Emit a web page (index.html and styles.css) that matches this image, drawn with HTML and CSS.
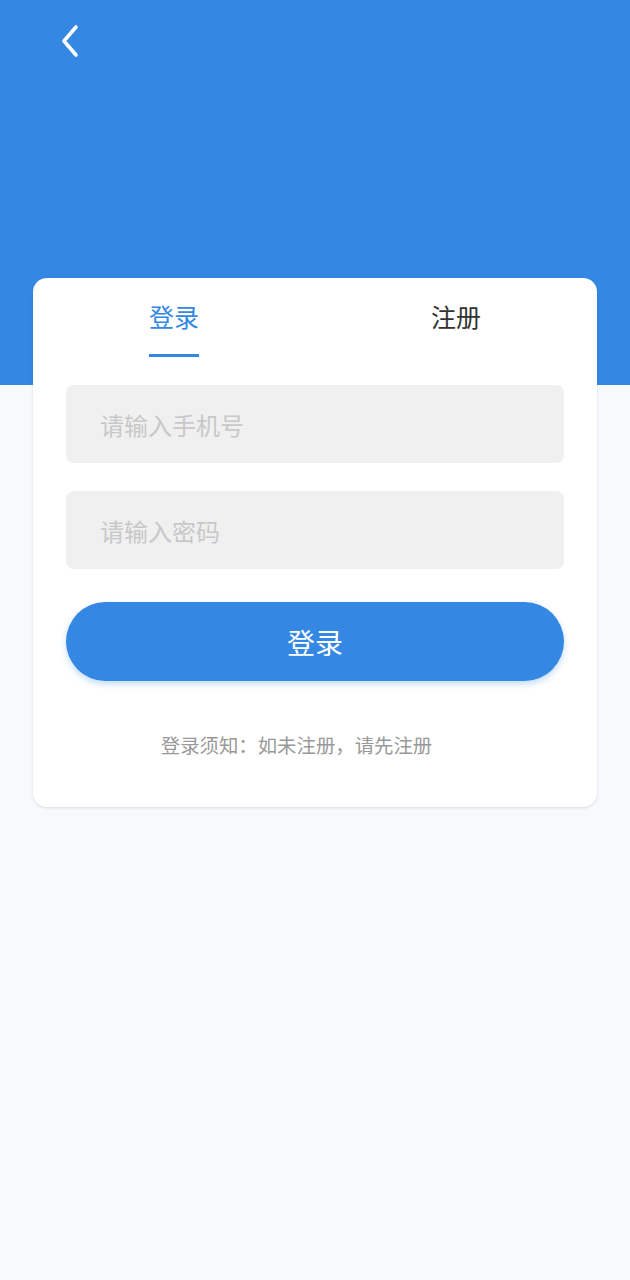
FILE: index.html
```html
<!DOCTYPE html>
<html lang="zh-CN">
<head>
<meta charset="utf-8">
<title>登录</title>
<link rel="stylesheet" href="styles.css">
</head>
<body>
<div class="page">
  <header class="hero">
    <button class="back" aria-label="返回">
      <svg width="22" height="34" viewBox="0 0 22 34"><path d="M17 3 L5 17 L17 31" fill="none" stroke="#fff" stroke-width="3.6" stroke-linecap="round" stroke-linejoin="round"/></svg>
    </button>
  </header>
  <main class="card">
    <nav class="tabs">
      <div class="tab active"><span class="tab-label">登录</span></div>
      <div class="tab"><span class="tab-label">注册</span></div>
    </nav>
    <form class="form">
      <div class="field">请输入手机号</div>
      <div class="field">请输入密码</div>
      <div class="submit">登录</div>
      <p class="notice">登录须知：如未注册，请先注册</p>
    </form>
  </main>
</div>
</body>
</html>
```
FILE: styles.css
```css
* { box-sizing: border-box; }
html, body { margin: 0; padding: 0; }
body {
  background: #f7f9fd;
  font-family: "Noto Sans CJK SC", "Noto Sans", sans-serif;
  width: 630px;
  height: 1280px;
  overflow: hidden;
}
.page { position: relative; }
.hero {
  height: 385px;
  background: #3488e3;
  padding: 24px 0 0 59px;
}
.back {
  background: none;
  border: 0;
  padding: 0;
  display: block;
  width: 22px;
  height: 34px;
}
.card {
  margin: -107px 33px 0;
  background: #fff;
  border-radius: 14px;
  box-shadow: 0 1px 3px rgba(0,0,0,0.12);
  padding-bottom: 48px;
  position: relative;
}
.tabs {
  display: flex;
  height: 107px;
}
.tab {
  flex: 1;
  display: flex;
  justify-content: center;
}
.tab-label {
  display: block;
  font-size: 25px;
  line-height: 36px;
  margin-top: 20px;
  color: #333;
  height: 59px;
  border-bottom: 3px solid transparent;
}
.tab.active .tab-label {
  color: #3488e3;
  border-bottom-color: #3488e3;
}
.form {
  margin: 0;
  padding: 0 33px;
}
.field {
  height: 78px;
  background: #f0f0f0;
  border-radius: 8px;
  padding-left: 34px;
  display: flex;
  align-items: center;
  font-size: 24px;
  color: #c8c8c8;
  margin-bottom: 28px;
}
.submit {
  margin-top: 33px;
  height: 79px;
  border-radius: 40px;
  background: #3488e3;
  color: #fff;
  font-size: 28px;
  display: flex;
  align-items: center;
  justify-content: center;
  box-shadow: 0 3px 6px rgba(52,136,227,0.3);
}
.notice {
  margin: 50px 0 0;
  padding-right: 37px;
  text-align: center;
  font-size: 19.4px;
  line-height: 28px;
  color: #999;
}
```
